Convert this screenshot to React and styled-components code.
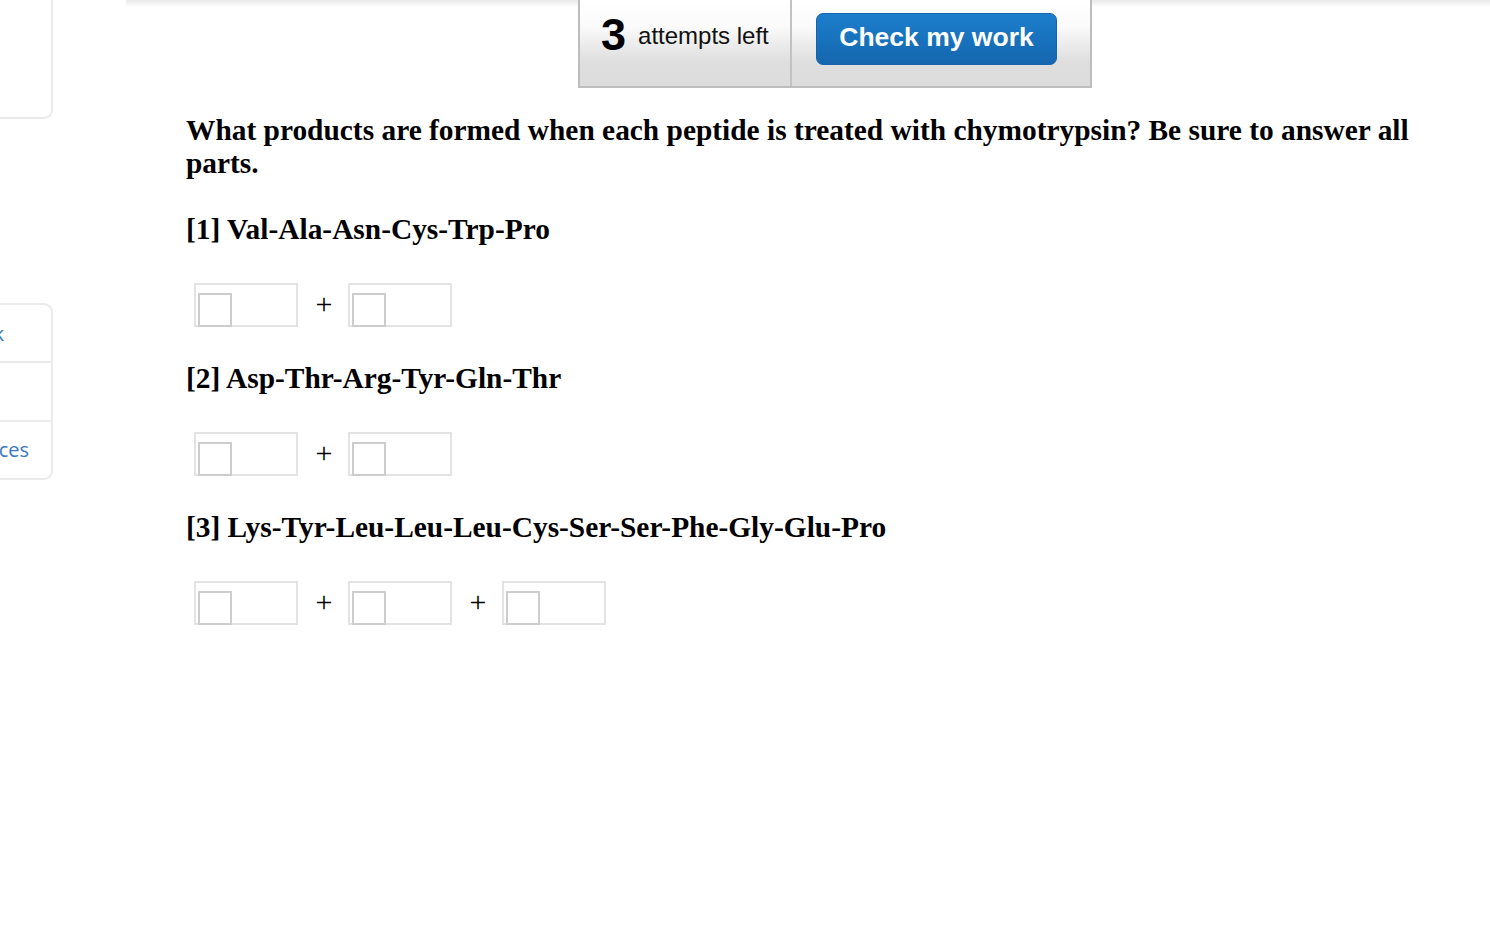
import React from 'react';
import styled, { createGlobalStyle } from 'styled-components';

const GlobalStyle = createGlobalStyle`
  html, body {
    margin: 0;
    padding: 0;
    background: #fff;
  }
  body {
    font-family: "Liberation Serif", "Times New Roman", serif;
    color: #000;
  }
`;

const Page = styled.div`
  display: flex;
  min-height: 948px;
`;

const Sidebar = styled.aside`
  width: 126px;
  flex-shrink: 0;
  display: flex;
  flex-direction: column;
`;

const SideCard = styled.div`
  width: 53px;
  box-sizing: border-box;
  height: ${(p) => p.height}px;
  margin-top: ${(p) => p.top}px;
  border: 2px solid #ebebeb;
  border-left: none;
  border-top: ${(p) => (p.flushTop ? 'none' : '2px solid #ebebeb')};
  border-radius: ${(p) => (p.flushTop ? '0 0 9px 0' : '0 9px 9px 0')};
  overflow: hidden;
  display: flex;
  flex-direction: column;
`;

const SideRow = styled.div`
  flex: 1;
  display: flex;
  align-items: center;
  justify-content: flex-end;
  padding-right: ${(p) => p.trail || 0}px;
  white-space: nowrap;
  font-family: "Open Sans", "Liberation Sans", sans-serif;
  font-size: 20px;
  color: #3a78c0;
  & + & {
    border-top: 2px solid #ebebeb;
  }
`;

const Main = styled.main`
  flex: 1;
  background: linear-gradient(#e9e9e9, #ffffff) no-repeat;
  background-size: 100% 7px;
`;

const Toolbar = styled.div`
  display: flex;
  width: 514px;
  height: 88px;
  box-sizing: border-box;
  margin-left: 452px;
  border: 2px solid #bdbdbd;
  border-top: none;
  font-family: "Liberation Sans", Arial, sans-serif;
`;

const ToolCell = styled.div`
  width: ${(p) => p.width}px;
  box-sizing: border-box;
  background: linear-gradient(#ffffff 0%, #fbfbfb 30%, #dedede 72%, #dcdcdc 100%);
  display: flex;
  align-items: flex-start;
  & + & {
    border-left: 2px solid #c2c2c2;
  }
`;

const Attempts = styled.div`
  display: flex;
  align-items: flex-start;
  gap: 12px;
  padding: 12px 0 0 21px;
`;

const AttemptCount = styled.span`
  font-size: 45px;
  font-weight: bold;
  line-height: 45px;
`;

const AttemptLabel = styled.span`
  margin-top: 12px;
  font-size: 24px;
  line-height: 24px;
  color: #111;
`;

const CheckButton = styled.button`
  margin: 13px 0 0 24px;
  width: 241px;
  height: 52px;
  border: 1px solid #1763ab;
  border-radius: 7px;
  background: linear-gradient(#1c7ecb, #1566af);
  color: #fff;
  font-family: "Liberation Sans", Arial, sans-serif;
  font-weight: bold;
  font-size: 26.5px;
  cursor: pointer;
  padding: 0 0 3px;
`;

const Content = styled.div`
  padding: 26px 60px 0 60px;
`;

const Prompt = styled.p`
  margin: 0;
  font-size: 29.4px;
  font-weight: bold;
  line-height: 33px;
`;

const Part = styled.section`
  margin-top: 33px;
  padding-bottom: 2px;
`;

const PartTitle = styled.h3`
  margin: 0;
  font-size: 29.4px;
  font-weight: bold;
  line-height: 33px;
`;

const AnswerRow = styled.div`
  display: flex;
  align-items: center;
  margin: 37px 0 0 8px;
`;

const AnswerBox = styled.div`
  position: relative;
  width: 104px;
  height: 44px;
  box-sizing: border-box;
  border: 2px solid #e3e3e3;
`;

const AnswerSlot = styled.div`
  position: absolute;
  left: 2px;
  bottom: -2px;
  width: 34px;
  height: 34px;
  box-sizing: border-box;
  border: 2px solid #cdcdcd;
  background: #fff;
`;

const Plus = styled.span`
  width: 50px;
  padding-left: 2px;
  box-sizing: border-box;
  text-align: center;
  font-family: "Liberation Serif", "Times New Roman", serif;
  font-size: 30px;
  line-height: 1;
  padding-bottom: 3px;
`;

const parts = [
  { label: '[1] Val-Ala-Asn-Cys-Trp-Pro', boxes: 2 },
  { label: '[2] Asp-Thr-Arg-Tyr-Gln-Thr', boxes: 2 },
  { label: '[3] Lys-Tyr-Leu-Leu-Leu-Cys-Ser-Ser-Phe-Gly-Glu-Pro', boxes: 3 },
];

const App = () => {
  return (
    <>
      <GlobalStyle />
      <Page>
        <Sidebar>
          <SideCard flushTop height={119} top={0} />
          <SideCard height={177} top={184}>
            <SideRow trail={47}>eBook</SideRow>
            <SideRow />
            <SideRow trail={22}>References</SideRow>
          </SideCard>
        </Sidebar>
        <Main>
          <Toolbar>
            <ToolCell width={210}>
              <Attempts>
                <AttemptCount>3</AttemptCount>
                <AttemptLabel>attempts left</AttemptLabel>
              </Attempts>
            </ToolCell>
            <ToolCell width={300}>
              <CheckButton>Check my work</CheckButton>
            </ToolCell>
          </Toolbar>
          <Content>
            <Prompt>
              What products are formed when each peptide is treated with chymotrypsin? Be sure to answer all parts.
            </Prompt>
            {parts.map((part) => (
              <Part key={part.label}>
                <PartTitle>{part.label}</PartTitle>
                <AnswerRow>
                  {Array.from({ length: part.boxes }).map((_, i) => (
                    <React.Fragment key={i}>
                      {i > 0 && <Plus>+</Plus>}
                      <AnswerBox>
                        <AnswerSlot />
                      </AnswerBox>
                    </React.Fragment>
                  ))}
                </AnswerRow>
              </Part>
            ))}
          </Content>
        </Main>
      </Page>
    </>
  );
};

export default App;
